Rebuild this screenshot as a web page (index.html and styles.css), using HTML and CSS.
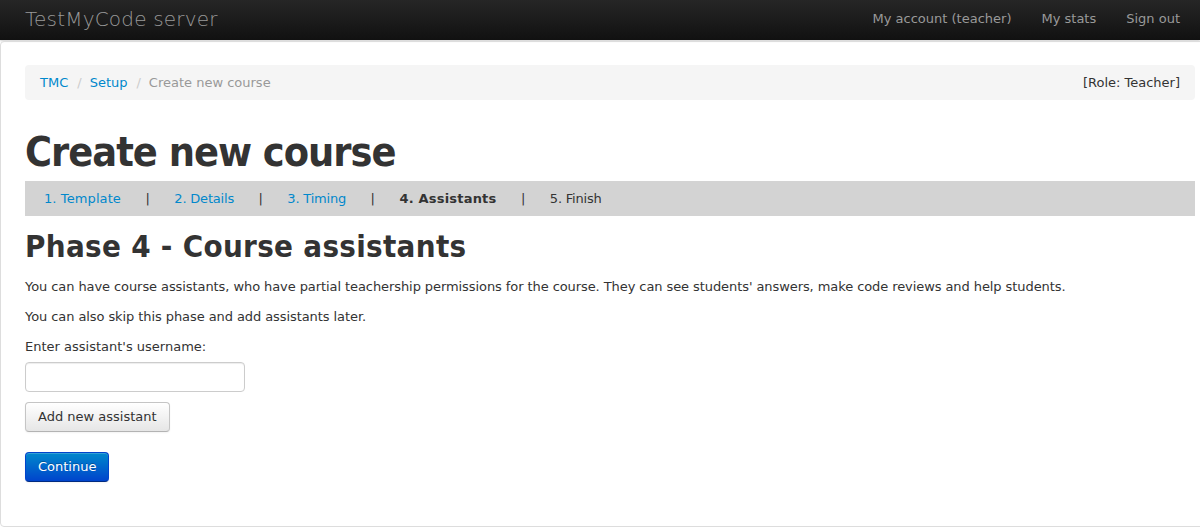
FILE: index.html
```
<!DOCTYPE html>
<html>
<head>
<meta charset="utf-8">
<title>TestMyCode server</title>
<link rel="stylesheet" href="styles.css">
</head>
<body>
<div class="navbar">
  <a class="brand" href="#">TestMyCode server</a>
  <ul class="nav">
    <li><a href="#">My account (teacher)</a></li>
    <li><a href="#">My stats</a></li>
    <li><a href="#">Sign out</a></li>
  </ul>
</div>
<div class="panel">
  <div class="breadcrumb">
    <ul class="crumbs">
      <li><a href="#">TMC</a><span class="divider">/</span></li>
      <li><a href="#">Setup</a><span class="divider">/</span></li>
      <li class="active">Create new course</li>
    </ul>
    <div class="role">[Role: Teacher]</div>
  </div>
  <h1>Create new course</h1>
  <ul class="phases">
    <li class="first"><a href="#">1. Template</a></li>
    <li class="sep">|</li>
    <li><a href="#">2. Details</a></li>
    <li class="sep">|</li>
    <li><a href="#">3. Timing</a></li>
    <li class="sep">|</li>
    <li class="current">4. Assistants</li>
    <li class="sep">|</li>
    <li>5. Finish</li>
  </ul>
  <h2>Phase 4 - Course assistants</h2>
  <p>You can have course assistants, who have partial teachership permissions for the course. They can see students' answers, make code reviews and help students.</p>
  <p>You can also skip this phase and add assistants later.</p>
  <form class="form">
    <label class="label" for="username">Enter assistant's username:</label>
    <input class="input" id="username" type="text">
    <button class="btn" type="button">Add new assistant</button>
    <button class="btn btn-primary" type="button">Continue</button>
  </form>
</div>
</body>
</html>
```
FILE: styles.css
```
html, body {
  margin: 0;
  padding: 0;
  overflow: hidden;
}
body {
  background: #fff;
  font-family: "DejaVu Sans", Verdana, sans-serif;
  font-size: 13px;
  line-height: 20px;
  color: #333;
}
a {
  color: #0088cc;
  text-decoration: none;
}
ul {
  margin: 0;
  padding: 0;
  list-style: none;
}
.navbar {
  height: 40px;
  background: linear-gradient(to bottom, #262626, #111111);
  display: flex;
  align-items: center;
  justify-content: space-between;
  padding: 0 5px 0 25px;
  box-shadow: 0 1px 2px rgba(0,0,0,0.2);
}
.brand {
  color: #999;
  font-size: 20px;
  font-weight: 200;
  line-height: 20px;
  letter-spacing: 0.2px;
  margin-top: -2px;
}
.nav {
  display: flex;
  margin-top: -2px;
}
.nav a {
  display: block;
  color: #999;
  padding: 10px 15px;
  line-height: 20px;
}
.panel {
  margin: 1px -10px 0 0;
  border: 1px solid #ddd;
  border-radius: 4px;
  padding: 23px 14px 24px 24px;
  height: 437px;
}
.breadcrumb {
  background: #f5f5f5;
  border-radius: 4px;
  padding: 8px 15px;
  display: flex;
  justify-content: space-between;
  margin-bottom: 20px;
  line-height: 19px;
}
.crumbs {
  display: flex;
}
.crumbs .divider {
  color: #ccc;
  padding: 0 8px 0 9px;
}
.crumbs .active {
  color: #999;
}
h1 {
  font-family: "DejaVu Sans Condensed", "DejaVu Sans", sans-serif;
  font-stretch: condensed;
  font-size: 41px;
  line-height: 40px;
  font-weight: bold;
  margin: 32px 0 9px;
  letter-spacing: -1px;
}
.phases {
  background: #d3d3d3;
  display: flex;
  padding: 8px 19px;
  gap: 24.5px;
  line-height: 19px;
  letter-spacing: -0.2px;
}
.phases .first {
  letter-spacing: 0.1px;
}
.phases .sep {
  color: #333;
  letter-spacing: 0;
}
.phases .current {
  font-weight: bold;
  letter-spacing: 0.2px;
}
h2 {
  font-family: "DejaVu Sans Condensed", "DejaVu Sans", sans-serif;
  font-stretch: condensed;
  font-size: 31px;
  line-height: 40px;
  font-weight: bold;
  margin: 10px 0 11px;
  letter-spacing: 0.3px;
}
p {
  margin: 0 0 10px;
  letter-spacing: -0.08px;
}
.form {
  display: flex;
  flex-direction: column;
  align-items: flex-start;
}
.label {
  display: block;
  margin-bottom: 5px;
}
.input {
  box-sizing: border-box;
  width: 220px;
  height: 30px;
  padding: 4px 6px;
  border: 1px solid #ccc;
  border-radius: 4px;
  box-shadow: inset 0 1px 1px rgba(0,0,0,0.075);
  font: inherit;
  margin: 0 0 10px;
}
.btn {
  font: inherit;
  line-height: 20px;
  padding: 4px 12px;
  color: #333;
  background: linear-gradient(to bottom, #ffffff, #e6e6e6);
  border: 1px solid #c5c5c5;
  border-bottom-color: #b3b3b3;
  border-radius: 4px;
  box-shadow: inset 0 1px 0 rgba(255,255,255,0.2), 0 1px 2px rgba(0,0,0,0.05);
  margin: 0 0 20px;
}
.btn-primary {
  color: #fff;
  background: linear-gradient(to bottom, #0088cc, #0044cc);
  border-color: #0044cc #0044cc #002a80;
  text-shadow: 0 -1px 0 rgba(0,0,0,0.25);
}
```
